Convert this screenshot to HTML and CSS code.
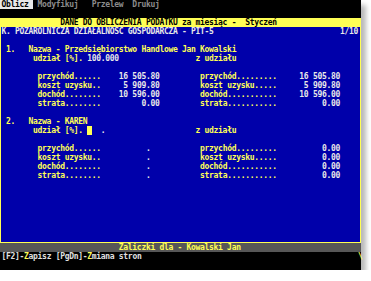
FILE: index.html
```html
<!DOCTYPE html>
<html lang="pl">
<head>
    <meta charset="UTF-8">
    <title>Oblicz - PIT-5</title>
    <link rel="stylesheet" href="styles.css">
</head>
<body>
    <div class="screen">
        <div class="row menubar"><span class="menu-on">Oblicz </span> Modyfikuj   Przelew  Drukuj</div>
        <div class="row"></div>
        <div class="row title">             DANE DO OBLICZENIA PODATKU za miesiąc -  Styczeń</div>

        <div class="panel">
            <div class="row w">K. POZAROLNICZA DZIAŁALNOŚĆ GOSPODARCZA - PIT-5                            1/10</div>
            <div class="row"></div>
            <div class="row y"> 1.   Nazwa - Przedsiębiorstwo Handlowe Jan Kowalski</div>
            <div class="row y">       udział [%]. <span class="w">100.000</span>                 z udziału</div>
            <div class="row"></div>
            <div class="row y">        przychód......    <span class="w">16 505.80</span>         przychód.........     <span class="w">16 505.80</span></div>
            <div class="row y">        koszt uzysku..    <span class="w"> 5 909.80</span>         koszt uzysku.....     <span class="w"> 5 909.80</span></div>
            <div class="row y">        dochód........    <span class="w">10 596.00</span>         dochód...........     <span class="w">10 596.00</span></div>
            <div class="row y">        strata........    <span class="w">     0.00</span>         strata...........     <span class="w">     0.00</span></div>
            <div class="row"></div>
            <div class="row y"> 2.   Nazwa - KAREN</div>
            <div class="row y">       udział [%]. <span class="cursor"> </span><span class="w">  .</span>                    z udziału</div>
            <div class="row"></div>
            <div class="row y">        przychód......    <span class="w">      .  </span>         przychód.........     <span class="w">     0.00</span></div>
            <div class="row y">        koszt uzysku..    <span class="w">      .  </span>         koszt uzysku.....     <span class="w">     0.00</span></div>
            <div class="row y">        dochód........    <span class="w">      .  </span>         dochód...........     <span class="w">     0.00</span></div>
            <div class="row y">        strata........    <span class="w">      .  </span>         strata...........     <span class="w">     0.00</span></div>
        </div>

        <div class="row status">                          Zaliczki dla - Kowalski Jan</div>
        <div class="row keys">[F2]-<span class="y">Z</span>apisz [PgDn]-<span class="y">Z</span>miana stron                                                <span class="y">\</span></div>
        <div class="row"></div>
    </div>
</body>
</html>
```

FILE: styles.css
```css
body {
    margin: 0;
    background-color: white;
}

/* 80 x 30 text screen, one cell = 4.51 x 9 px */
.screen {
    width: 361px;
    height: 270px;
    background-color: #000;
    color: #d8d8d8;
    font-family: "DejaVu Sans Mono", "Liberation Mono", monospace;
    font-weight: bold;
    font-size: 8px;
    letter-spacing: -0.304px;
    box-shadow: 5px 5px 5px rgba(0, 0, 0, 0.28);
}
.row {
    height: 9px;
    line-height: 9px;
    padding-left: 1.5px;
    white-space: pre;
}

/* Menu */
.menubar {
    color: #8c8c8c;
    padding-left: 0;
}
.menu-on {
    display: inline-block;
    padding-left: 1.5px;
    background-color: #e8e8e8;
    color: #000;
}

.title {
    background-color: #ffff55;
    color: #000;
}

/* Blue panel with yellow frame */
.panel {
    height: 216px;
    background-color: #0000aa;
    box-shadow: inset 1px 0 #ffff55, inset -1px 0 #ffff55, inset 0 -1px #ffff55;
}
.y {
    color: #ffff55;
}
.w {
    color: #e8e8e8;
}
.cursor {
    display: inline-block;
    width: 4.51px;
    height: 9px;
    vertical-align: top;
    background-color: #ffff55;
}

.status {
    background-color: #575757;
    color: #ffff55;
}
.keys {
    color: #e0e0e0;
}
```
